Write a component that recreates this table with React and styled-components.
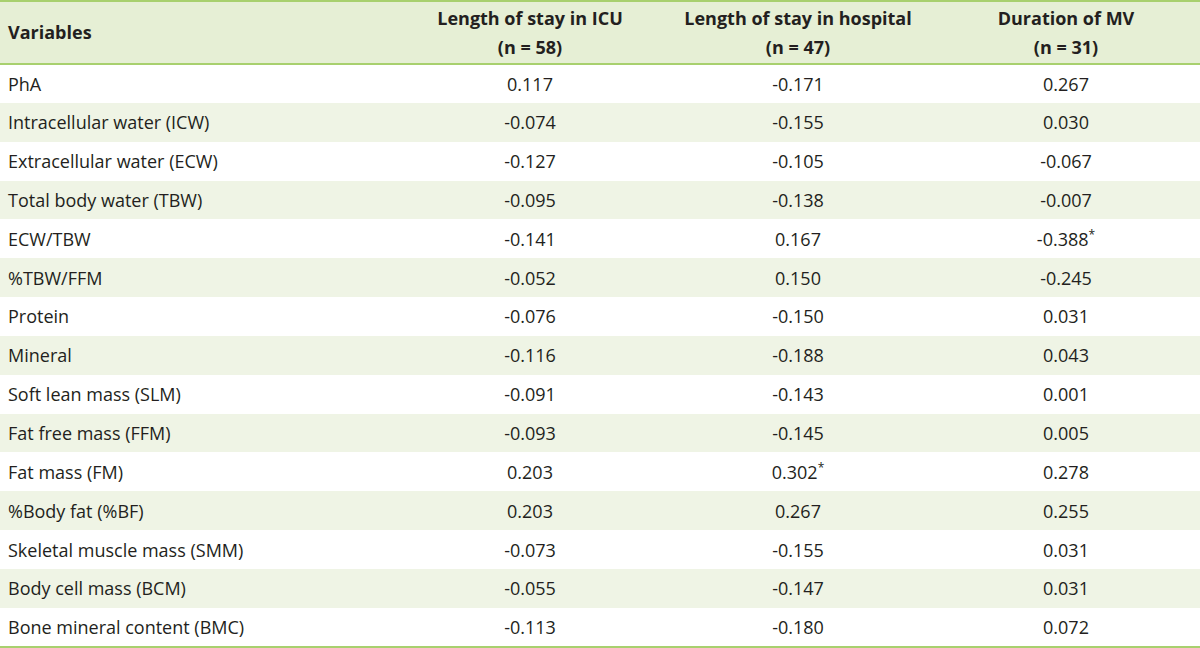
import React from "react";
import styled, { createGlobalStyle } from "styled-components";

const Global = createGlobalStyle`
  html, body { margin: 0; padding: 0; background: #ffffff; }
  body { font-family: "Open Sans", "Noto Sans", sans-serif; color: #231f20; }
`;

const Table = styled.table`
  width: 1200px;
  border-collapse: collapse;
  table-layout: fixed;
  font-size: 18px;
  border-top: 2px solid #a8d06e;
  border-bottom: 2px solid #a8d06e;
`;

const HeadRow = styled.tr`
  background: #e6efd5;
  border-bottom: 2px solid #a8d06e;
  height: 63px;
`;

const Th = styled.th`
  font-weight: 700;
  text-align: ${(p) => (p.$left ? "left" : "center")};
  padding: ${(p) => (p.$left ? "0 0 0 8px" : "0")};
  line-height: 29px;
  vertical-align: middle;
`;

const Row = styled.tr`
  height: 38.85px;
  background: ${(p) => (p.$alt ? "#eff4e5" : "#ffffff")};
`;

const Td = styled.td`
  text-align: ${(p) => (p.$left ? "left" : "center")};
  padding: ${(p) => (p.$left ? "0 0 0 8px" : "0")};
  vertical-align: middle;
  white-space: nowrap;
  line-height: 24px;
`;

const Star = styled.sup`
  font-size: 12px;
  line-height: 0;
  vertical-align: super;
`;

const rows = [
  ["PhA", "0.117", "-0.171", "0.267"],
  ["Intracellular water (ICW)", "-0.074", "-0.155", "0.030"],
  ["Extracellular water (ECW)", "-0.127", "-0.105", "-0.067"],
  ["Total body water (TBW)", "-0.095", "-0.138", "-0.007"],
  ["ECW/TBW", "-0.141", "0.167", "-0.388*"],
  ["%TBW/FFM", "-0.052", "0.150", "-0.245"],
  ["Protein", "-0.076", "-0.150", "0.031"],
  ["Mineral", "-0.116", "-0.188", "0.043"],
  ["Soft lean mass (SLM)", "-0.091", "-0.143", "0.001"],
  ["Fat free mass (FFM)", "-0.093", "-0.145", "0.005"],
  ["Fat mass (FM)", "0.203", "0.302*", "0.278"],
  ["%Body fat (%BF)", "0.203", "0.267", "0.255"],
  ["Skeletal muscle mass (SMM)", "-0.073", "-0.155", "0.031"],
  ["Body cell mass (BCM)", "-0.055", "-0.147", "0.031"],
  ["Bone mineral content (BMC)", "-0.113", "-0.180", "0.072"],
];

const Value = ({ v }) =>
  v.endsWith("*") ? (
    <>
      {v.slice(0, -1)}
      <Star>*</Star>
    </>
  ) : (
    v
  );

export default function App() {
  return (
    <>
      <Global />
      <Table>
        <colgroup>
          <col style={{ width: 396 }} />
          <col style={{ width: 268 }} />
          <col style={{ width: 268 }} />
          <col style={{ width: 268 }} />
        </colgroup>
        <thead>
          <HeadRow>
            <Th $left>Variables</Th>
            <Th>
              Length of stay in ICU
              <br />
              (n = 58)
            </Th>
            <Th>
              Length of stay in hospital
              <br />
              (n = 47)
            </Th>
            <Th>
              Duration of MV
              <br />
              (n = 31)
            </Th>
          </HeadRow>
        </thead>
        <tbody>
          {rows.map((r, i) => (
            <Row key={r[0]} $alt={i % 2 === 1}>
              <Td $left>{r[0]}</Td>
              <Td><Value v={r[1]} /></Td>
              <Td><Value v={r[2]} /></Td>
              <Td><Value v={r[3]} /></Td>
            </Row>
          ))}
        </tbody>
      </Table>
    </>
  );
}
